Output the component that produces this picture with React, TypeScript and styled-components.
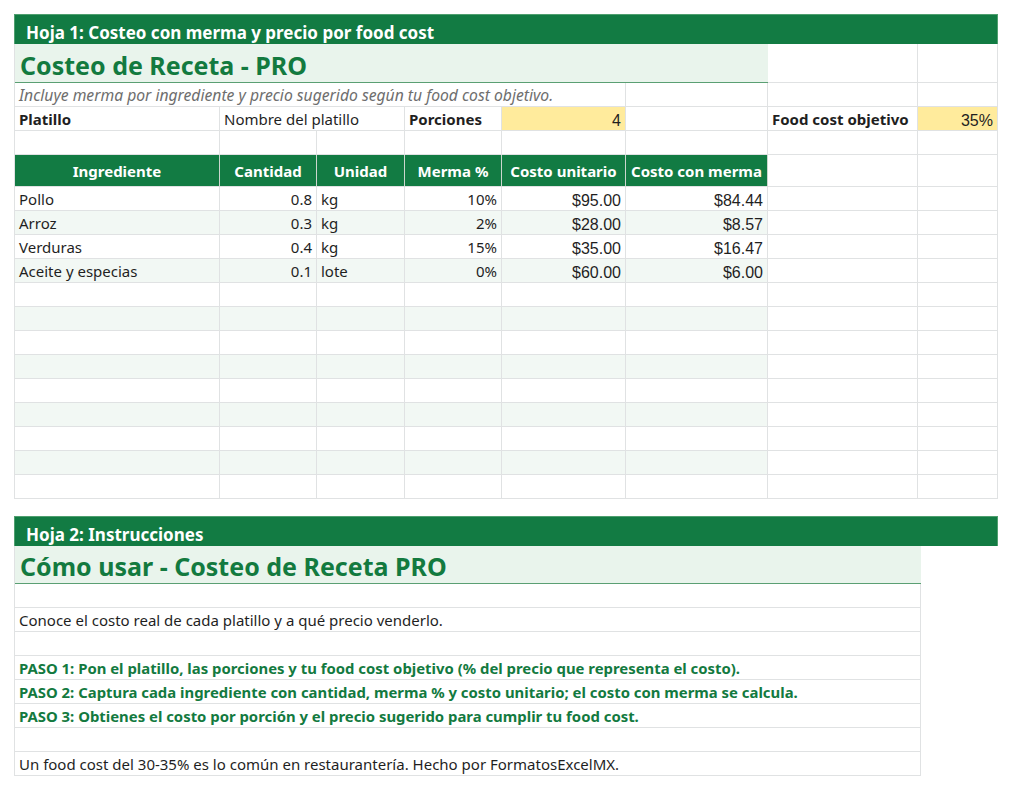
import React from "react";
import styled, { createGlobalStyle, css } from "styled-components";

const GREEN = "#127b43";
const TITLE_GREEN = "#137a3f";
const LIGHT_GREEN = "#e9f4ec";
const STRIPE = "#f2f8f4";
const YELLOW = "#ffeb9c";
const GRID = "#e0e2e3";
const TEXT = "#1f1f1f";

const GlobalStyle = createGlobalStyle`
  html, body { margin: 0; padding: 0; background: #ffffff; }
  body { font-family: "Noto Sans", "Liberation Sans", sans-serif; color: ${TEXT}; }
  * { box-sizing: border-box; }
`;

const Page = styled.div`
  display: flex;
  flex-direction: column;
  gap: 17px;
  padding: 14px 0 0 14px;
  width: 1011px;
`;

const Section = styled.section`
  display: flex;
  flex-direction: column;
`;

const SheetBar = styled.div`
  width: 984px;
  height: 30px;
  background: ${GREEN};
  border: 1px solid #4f9f6f;
  border-bottom: none;
  color: #ffffff;
  font-weight: 700;
  font-size: 17px;
  display: flex;
  align-items: flex-end;
  padding: 0 0 0 11px;
  line-height: 22px;
`;

const Grid = styled.div<{ $cols: string; $rows: string }>`
  display: grid;
  grid-template-columns: ${(p) => p.$cols};
  grid-template-rows: ${(p) => p.$rows};
  border-left: 1px solid ${GRID};
  width: max-content;
`;

type CellProps = {
  $span?: number;
  $bg?: string;
  $align?: "left" | "right" | "center";
  $num?: boolean;
  $bold?: boolean;
};

const Cell = styled.div<CellProps>`
  grid-column: span ${(p) => p.$span ?? 1};
  background: ${(p) => p.$bg ?? "transparent"};
  border-right: 1px solid ${GRID};
  border-bottom: 1px solid ${GRID};
  display: flex;
  align-items: center;
  justify-content: ${(p) =>
    p.$align === "right" ? "flex-end" : p.$align === "center" ? "center" : "flex-start"};
  padding: 1px 4px 0 4px;
  font-size: 15px;
  font-weight: ${(p) => (p.$bold ? 700 : 400)};
  white-space: nowrap;
  overflow: visible;
  ${(p) =>
    p.$num &&
    css`
      font-family: "Liberation Sans", Arial, sans-serif;
      font-size: 16px;
      padding-top: 5px;
    `}
`;

const TitleCell = styled(Cell)`
  background: ${LIGHT_GREEN};
  border-right: none;
  border-bottom: 1px solid #5a9f73;
  color: ${TITLE_GREEN};
  font-size: 25px;
  font-weight: 700;
  padding: 3px 5px 0 5px;
`;

const NoteCell = styled(Cell)`
  font-style: italic;
  color: #6e6e6e;
  font-size: 15.7px;
`;

const HeadCell = styled(Cell)`
  background: ${GREEN};
  color: #ffffff;
  font-weight: 700;
  justify-content: center;
  border-right-color: #cbd6ce;
  border-bottom-color: ${GRID};
`;

const StepCell = styled(Cell)`
  color: ${TITLE_GREEN};
  font-weight: 700;
  font-size: 14.88px;
`;

const SHEET1_COLS = "205px 97px 88px 97px 124px 142px 150px 80px";
const SHEET1_ROWS = "39px 24px 24px 24px 32px repeat(13, 24px)";

type Ingredient = {
  name: string;
  qty: string;
  unit: string;
  merma: string;
  unitCost: string;
  total: string;
};

const ingredients: Ingredient[] = [
  { name: "Pollo", qty: "0.8", unit: "kg", merma: "10%", unitCost: "$95.00", total: "$84.44" },
  { name: "Arroz", qty: "0.3", unit: "kg", merma: "2%", unitCost: "$28.00", total: "$8.57" },
  { name: "Verduras", qty: "0.4", unit: "kg", merma: "15%", unitCost: "$35.00", total: "$16.47" },
  { name: "Aceite y especias", qty: "0.1", unit: "lote", merma: "0%", unitCost: "$60.00", total: "$6.00" },
];

const rows: (Ingredient | null)[] = [
  ...ingredients,
  ...Array.from({ length: 9 }, () => null),
];

const headers = ["Ingrediente", "Cantidad", "Unidad", "Merma %", "Costo unitario", "Costo con merma"];

const steps = [
  "",
  "Conoce el costo real de cada platillo y a qué precio venderlo.",
  "",
  "PASO 1: Pon el platillo, las porciones y tu food cost objetivo (% del precio que representa el costo).",
  "PASO 2: Captura cada ingrediente con cantidad, merma % y costo unitario; el costo con merma se calcula.",
  "PASO 3: Obtienes el costo por porción y el precio sugerido para cumplir tu food cost.",
  "",
  "Un food cost del 30-35% es lo común en restaurantería. Hecho por FormatosExcelMX.",
];

export default function App() {
  return (
    <>
      <GlobalStyle />
      <Page>
        <Section>
          <SheetBar>Hoja 1: Costeo con merma y precio por food cost</SheetBar>
          <Grid $cols={SHEET1_COLS} $rows={SHEET1_ROWS}>
            <TitleCell $span={6}>Costeo de Receta - PRO</TitleCell>
            <Cell />
            <Cell />

            <NoteCell $span={5}>
              Incluye merma por ingrediente y precio sugerido según tu food cost objetivo.
            </NoteCell>
            <Cell />
            <Cell />
            <Cell />

            <Cell $bold>Platillo</Cell>
            <Cell $span={2}>Nombre del platillo</Cell>
            <Cell $bold>Porciones</Cell>
            <Cell $bg={YELLOW} $align="right" $num>
              4
            </Cell>
            <Cell />
            <Cell $bold>Food cost objetivo</Cell>
            <Cell $bg={YELLOW} $align="right" $num>
              35%
            </Cell>

            {Array.from({ length: 8 }, (_, i) => (
              <Cell key={`e${i}`} />
            ))}

            {headers.map((h) => (
              <HeadCell key={h}>{h}</HeadCell>
            ))}
            <Cell />
            <Cell />

            {rows.map((r, i) => {
              const bg = i % 2 === 1 ? STRIPE : undefined;
              return (
                <React.Fragment key={i}>
                  <Cell $bg={bg}>{r?.name}</Cell>
                  <Cell $bg={bg} $align="right">
                    {r?.qty}
                  </Cell>
                  <Cell $bg={bg}>{r?.unit}</Cell>
                  <Cell $bg={bg} $align="right">
                    {r?.merma}
                  </Cell>
                  <Cell $bg={bg} $align="right" $num>
                    {r?.unitCost}
                  </Cell>
                  <Cell $bg={bg} $align="right" $num>
                    {r?.total}
                  </Cell>
                  <Cell />
                  <Cell />
                </React.Fragment>
              );
            })}
          </Grid>
        </Section>

        <Section>
          <SheetBar>Hoja 2: Instrucciones</SheetBar>
          <Grid $cols="906px" $rows="38px repeat(8, 24px)">
            <TitleCell>Cómo usar - Costeo de Receta PRO</TitleCell>
            {steps.map((s, i) =>
              s.startsWith("PASO") ? (
                <StepCell key={i}>{s}</StepCell>
              ) : (
                <Cell key={i}>{s}</Cell>
              )
            )}
          </Grid>
        </Section>
      </Page>
    </>
  );
}
